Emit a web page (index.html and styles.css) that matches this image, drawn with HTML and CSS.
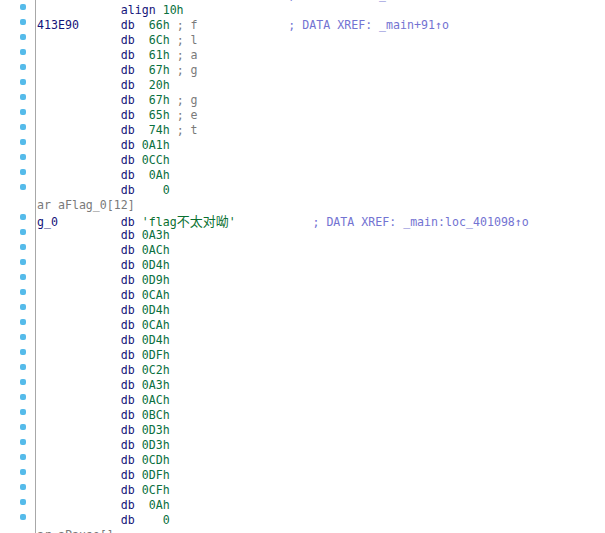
FILE: index.html
```html
<!DOCTYPE html>
<html lang="en">
<head>
    <meta charset="UTF-8">
    <title>IDA View</title>
    <link rel="stylesheet" href="styles.css">
</head>
<body>
    <div class="listing">
        <div class="row"><div class="gutter"></div><pre class="line">                                    <span class="xref">; DATA XREF: _main+6F↑o</span></pre></div>
        <div class="row"><div class="gutter"><i class="dot"></i></div><pre class="line">            <span class="ins">align</span> <span class="num">10h</span></pre></div>
        <div class="row"><div class="gutter"><i class="dot"></i></div><pre class="line"><span class="label">413E90</span>      <span class="ins">db</span>  <span class="num">66h</span> <span class="cmt">; f</span>             <span class="xref">; DATA XREF: _main+91↑o</span></pre></div>
        <div class="row"><div class="gutter"><i class="dot"></i></div><pre class="line">            <span class="ins">db</span>  <span class="num">6Ch</span> <span class="cmt">; l</span></pre></div>
        <div class="row"><div class="gutter"><i class="dot"></i></div><pre class="line">            <span class="ins">db</span>  <span class="num">61h</span> <span class="cmt">; a</span></pre></div>
        <div class="row"><div class="gutter"><i class="dot"></i></div><pre class="line">            <span class="ins">db</span>  <span class="num">67h</span> <span class="cmt">; g</span></pre></div>
        <div class="row"><div class="gutter"><i class="dot"></i></div><pre class="line">            <span class="ins">db</span>  <span class="num">20h</span></pre></div>
        <div class="row"><div class="gutter"><i class="dot"></i></div><pre class="line">            <span class="ins">db</span>  <span class="num">67h</span> <span class="cmt">; g</span></pre></div>
        <div class="row"><div class="gutter"><i class="dot"></i></div><pre class="line">            <span class="ins">db</span>  <span class="num">65h</span> <span class="cmt">; e</span></pre></div>
        <div class="row"><div class="gutter"><i class="dot"></i></div><pre class="line">            <span class="ins">db</span>  <span class="num">74h</span> <span class="cmt">; t</span></pre></div>
        <div class="row"><div class="gutter"><i class="dot"></i></div><pre class="line">            <span class="ins">db</span> <span class="num">0A1h</span></pre></div>
        <div class="row"><div class="gutter"><i class="dot"></i></div><pre class="line">            <span class="ins">db</span> <span class="num">0CCh</span></pre></div>
        <div class="row"><div class="gutter"><i class="dot"></i></div><pre class="line">            <span class="ins">db</span>  <span class="num">0Ah</span></pre></div>
        <div class="row"><div class="gutter"><i class="dot"></i></div><pre class="line">            <span class="ins">db</span>    <span class="num">0</span></pre></div>
        <div class="row"><div class="gutter"></div><pre class="line"><span class="cmt">ar aFlag_0[12]</span></pre></div>
        <div class="row"><div class="gutter"><i class="dot"></i></div><pre class="line"><span class="label">g_0</span>         <span class="ins">db</span> <span class="str">'flag<span class="cjk">不太对呦</span>'</span>           <span class="xref">; DATA XREF: _main:loc_401098↑o</span></pre></div>
        <div class="row"><div class="gutter"><i class="dot"></i></div><pre class="line">            <span class="ins">db</span> <span class="num">0A3h</span></pre></div>
        <div class="row"><div class="gutter"><i class="dot"></i></div><pre class="line">            <span class="ins">db</span> <span class="num">0ACh</span></pre></div>
        <div class="row"><div class="gutter"><i class="dot"></i></div><pre class="line">            <span class="ins">db</span> <span class="num">0D4h</span></pre></div>
        <div class="row"><div class="gutter"><i class="dot"></i></div><pre class="line">            <span class="ins">db</span> <span class="num">0D9h</span></pre></div>
        <div class="row"><div class="gutter"><i class="dot"></i></div><pre class="line">            <span class="ins">db</span> <span class="num">0CAh</span></pre></div>
        <div class="row"><div class="gutter"><i class="dot"></i></div><pre class="line">            <span class="ins">db</span> <span class="num">0D4h</span></pre></div>
        <div class="row"><div class="gutter"><i class="dot"></i></div><pre class="line">            <span class="ins">db</span> <span class="num">0CAh</span></pre></div>
        <div class="row"><div class="gutter"><i class="dot"></i></div><pre class="line">            <span class="ins">db</span> <span class="num">0D4h</span></pre></div>
        <div class="row"><div class="gutter"><i class="dot"></i></div><pre class="line">            <span class="ins">db</span> <span class="num">0DFh</span></pre></div>
        <div class="row"><div class="gutter"><i class="dot"></i></div><pre class="line">            <span class="ins">db</span> <span class="num">0C2h</span></pre></div>
        <div class="row"><div class="gutter"><i class="dot"></i></div><pre class="line">            <span class="ins">db</span> <span class="num">0A3h</span></pre></div>
        <div class="row"><div class="gutter"><i class="dot"></i></div><pre class="line">            <span class="ins">db</span> <span class="num">0ACh</span></pre></div>
        <div class="row"><div class="gutter"><i class="dot"></i></div><pre class="line">            <span class="ins">db</span> <span class="num">0BCh</span></pre></div>
        <div class="row"><div class="gutter"><i class="dot"></i></div><pre class="line">            <span class="ins">db</span> <span class="num">0D3h</span></pre></div>
        <div class="row"><div class="gutter"><i class="dot"></i></div><pre class="line">            <span class="ins">db</span> <span class="num">0D3h</span></pre></div>
        <div class="row"><div class="gutter"><i class="dot"></i></div><pre class="line">            <span class="ins">db</span> <span class="num">0CDh</span></pre></div>
        <div class="row"><div class="gutter"><i class="dot"></i></div><pre class="line">            <span class="ins">db</span> <span class="num">0DFh</span></pre></div>
        <div class="row"><div class="gutter"><i class="dot"></i></div><pre class="line">            <span class="ins">db</span> <span class="num">0CFh</span></pre></div>
        <div class="row"><div class="gutter"><i class="dot"></i></div><pre class="line">            <span class="ins">db</span>  <span class="num">0Ah</span></pre></div>
        <div class="row"><div class="gutter"><i class="dot"></i></div><pre class="line">            <span class="ins">db</span>    <span class="num">0</span></pre></div>
        <div class="row"><div class="gutter"></div><pre class="line"><span class="cmt">ar aPause[]</span></pre></div>
    </div>
</body>
</html>
```

FILE: styles.css
```css
html, body {
    margin: 0;
    background: #ffffff;
    overflow: hidden;
}
.listing {
    margin-top: -12px;
    font-family: "DejaVu Sans Mono", "Liberation Mono", monospace;
    font-size: 11.6px;
}
.row {
    display: flex;
    height: 15px;
}
.gutter {
    width: 35px;
    flex: none;
    border-right: 1px solid #a8a8a8;
    position: relative;
}
.dot {
    position: absolute;
    left: 20px;
    top: 1px;
    width: 6px;
    height: 6px;
    border-radius: 2px;
    background: #55bbea;
}
.line {
    margin: 0;
    padding-left: 1px;
    font: inherit;
    line-height: 15px;
    height: 15px;
    white-space: pre;
}
.label {
    color: #14147a;
}
.ins {
    color: #14147a;
}
.num {
    color: #0a7040;
}
.str {
    color: #0a7030;
}
.cjk {
    font-family: "Noto Sans CJK SC", sans-serif;
    font-size: 13px;
    line-height: 15px;
}
.cmt {
    color: #7a7a7a;
}
.xref {
    color: #7373d2;
}
```
